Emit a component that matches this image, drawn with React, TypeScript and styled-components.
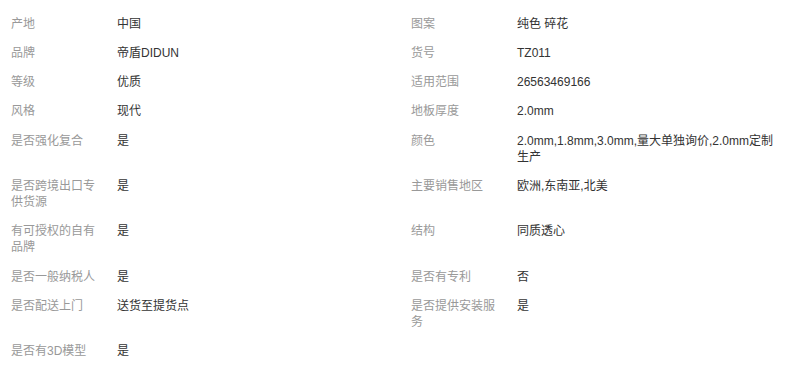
import styled, { createGlobalStyle } from "styled-components"

const GlobalStyle = createGlobalStyle`
  html, body {
    margin: 0;
    padding: 0;
    background: #fff;
  }
  body {
    font-family: "Liberation Sans", "Noto Sans CJK SC", sans-serif;
    font-size: 12px;
  }
`

const AttrTable = styled.div`
  width: 800px;
  padding-top: 9px;
`

const AttrRow = styled.div`
  display: grid;
  grid-template-columns: 106px 294px 106px 294px;
`

const Cell = styled.div<{ label?: boolean }>`
  padding: 6.65px 21px 6.65px 11px;
  line-height: 16px;
  color: ${({ label }) => (label ? "#999" : "#333")};
  word-break: break-all;

  ${({ label }) => label && "padding-right: 10px;"}
`

type Attr = [string, string]

const rows: [Attr, Attr | null][] = [
  [["产地", "中国"], ["图案", "纯色 碎花"]],
  [["品牌", "帝盾DIDUN"], ["货号", "TZ011"]],
  [["等级", "优质"], ["适用范围", "26563469166"]],
  [["风格", "现代"], ["地板厚度", "2.0mm"]],
  [
    ["是否强化复合", "是"],
    ["颜色", "2.0mm,1.8mm,3.0mm,量大单独询价,2.0mm定制生产"],
  ],
  [["是否跨境出口专供货源", "是"], ["主要销售地区", "欧洲,东南亚,北美"]],
  [["有可授权的自有品牌", "是"], ["结构", "同质透心"]],
  [["是否一般纳税人", "是"], ["是否有专利", "否"]],
  [["是否配送上门", "送货至提货点"], ["是否提供安装服务", "是"]],
  [["是否有3D模型", "是"], null],
]

export default function App() {
  return (
    <>
      <GlobalStyle />
      <AttrTable>
        {rows.map(([left, right], i) => (
          <AttrRow key={i}>
            <Cell label>{left[0]}</Cell>
            <Cell>{left[1]}</Cell>
            <Cell label>{right ? right[0] : ""}</Cell>
            <Cell>{right ? right[1] : ""}</Cell>
          </AttrRow>
        ))}
      </AttrTable>
    </>
  )
}
